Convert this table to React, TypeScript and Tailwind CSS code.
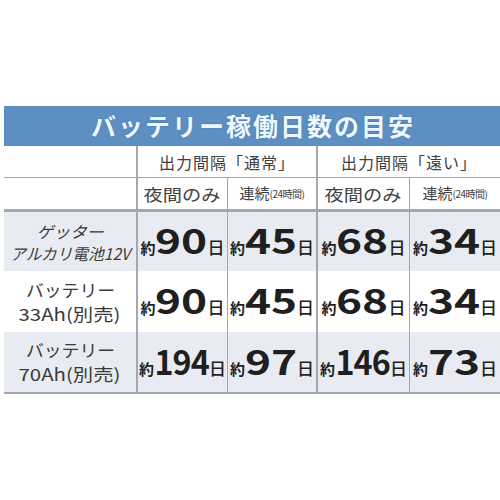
import React from "react";

const font = { fontFamily: '"Noto Sans CJK JP", "Noto Sans", sans-serif' };

type Cell = { n: string; three?: boolean };

const rows: { label: React.ReactNode; shaded: boolean; h: string; cells: Cell[] }[] = [
  {
    label: (
      <div className="flex flex-col items-center leading-[22px] text-[16px] text-[#3a3a3a] italic">
        <span className="scale-x-[1.05]">ゲッター</span>
        <span className="scale-x-[0.98] whitespace-nowrap">アルカリ電池12V</span>
      </div>
    ),
    shaded: true,
    h: "h-[59px]",
    cells: [{ n: "90" }, { n: "45" }, { n: "68" }, { n: "34" }],
  },
  {
    label: (
      <div className="flex flex-col items-center leading-[24px] text-[17px] text-[#3a3a3a]">
        <span className="scale-x-[1.05]">バッテリー</span>
        <span className="scale-x-[1.2] whitespace-nowrap">33Ah(別売)</span>
      </div>
    ),
    shaded: false,
    h: "h-[61px]",
    cells: [{ n: "90" }, { n: "45" }, { n: "68" }, { n: "34" }],
  },
  {
    label: (
      <div className="flex flex-col items-center leading-[24px] text-[17px] text-[#3a3a3a]">
        <span className="scale-x-[1.05]">バッテリー</span>
        <span className="scale-x-[1.2] whitespace-nowrap">70Ah(別売)</span>
      </div>
    ),
    shaded: true,
    h: "h-[60px]",
    cells: [{ n: "194", three: true }, { n: "97" }, { n: "146", three: true }, { n: "73" }],
  },
];

function Days({ n, three }: Cell) {
  return (
    <div className="flex items-baseline justify-center text-[#1f1f1f]">
      <span className="text-[15px] font-bold">約</span>
      <span
        className={
          three
            ? "text-[34px] font-bold leading-none tracking-[-1px] scale-x-[0.95] mx-[-1px]"
            : "text-[34px] font-bold leading-none scale-x-[1.3] mx-[6px]"
        }
      >
        {n}
      </span>
      <span className="text-[17px] font-medium">日</span>
    </div>
  );
}

export default function App() {
  return (
    <div className="w-[500px] h-[500px] bg-white pt-[106px] pl-[4px] overflow-hidden" style={font}>
      <div className="h-[40px] bg-[#5d8fc3] flex items-center justify-center">
        <span
          className="text-[25px] font-bold tracking-[2px] text-[#eef7ff] pl-[2px]"
          style={{ textShadow: "0 0 2px #3f6f9f" }}
        >
          バッテリー稼働日数の目安
        </span>
      </div>

      <div className="grid grid-cols-[134px_90px_90px_92px_90px]">
        {/* header row 1 */}
        <div className="h-[32px] border-b border-r-2 border-[#a4a8ae]" />
        <div className="col-span-2 h-[32px] border-b border-r-2 border-[#a4a8ae] flex items-center justify-center text-[16px] text-[#404040] tracking-[1px]">
          出力間隔「通常」
        </div>
        <div className="col-span-2 h-[32px] border-b border-[#a4a8ae] flex items-center justify-center text-[16px] text-[#404040] tracking-[1px]">
          出力間隔「遠い」
        </div>

        {/* header row 2 */}
        <div className="h-[34px] border-b-[3px] border-r-2 border-[#a4a8ae]" />
        {[0, 1].map(i => (
          <React.Fragment key={i}>
            <div className="h-[34px] border-b-[3px] border-r border-[#a4a8ae] flex items-center justify-center text-[#404040]">
              <span className="text-[16px] scale-x-[1.2]">夜間のみ</span>
            </div>
            <div
              className={
                i === 0
                  ? "h-[34px] border-b-[3px] border-r-2 border-[#a4a8ae] flex items-center justify-center text-[#404040]"
                  : "h-[34px] border-b-[3px] border-[#a4a8ae] flex items-center justify-center text-[#404040]"
              }
            >
              <span className="text-[15px]">連続</span>
              <span className="text-[10px] tracking-[-0.5px]">(24時間)</span>
            </div>
          </React.Fragment>
        ))}

        {/* data rows */}
        {rows.map((r, ri) => (
          <React.Fragment key={ri}>
            <div
              className={[
                r.h,
                "border-r-2 border-[#a4a8ae] flex items-center justify-center",
                r.shaded ? "bg-[#e8ecf2]" : "bg-white",
              ].join(" ")}
            >
              {r.label}
            </div>
            {r.cells.map((c, ci) => (
              <div
                key={ci}
                className={[
                  r.h,
                  "flex items-center justify-center",
                  ci === 3 ? "" : ci === 1 ? "border-r-2 border-[#a4a8ae]" : "border-r border-[#a4a8ae]",
                  r.shaded ? "bg-[#e8ecf2]" : "bg-white",
                ].join(" ")}
              >
                <Days {...c} />
              </div>
            ))}
          </React.Fragment>
        ))}
      </div>
      <div className="h-[2px] bg-[#a4a8ae]" />
    </div>
  );
}
